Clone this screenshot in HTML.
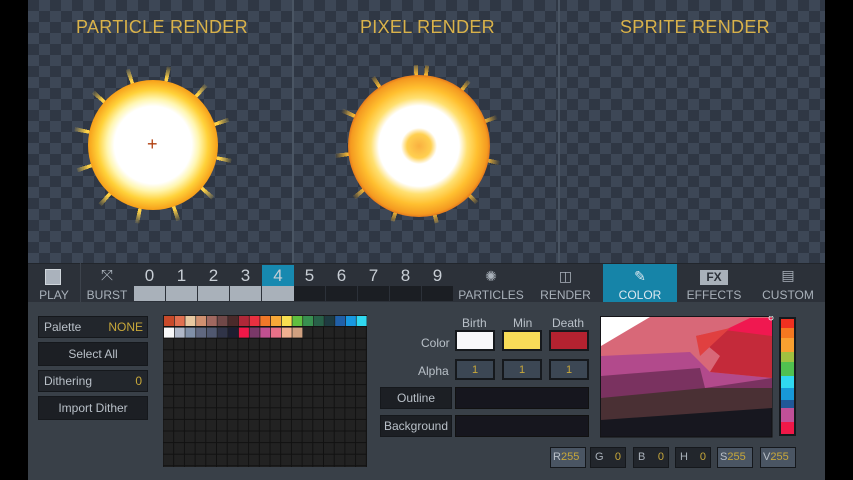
<!DOCTYPE html>
<html><head><style>
*{margin:0;padding:0;box-sizing:border-box}
body{width:853px;height:480px;background:#000;position:relative;overflow:hidden;font-family:"Liberation Sans","DejaVu Sans",sans-serif}
.a{position:absolute}
#view{left:28px;top:0;width:797px;height:263px;background-color:#2f3744;background-image:linear-gradient(45deg,#3d4756 25%,transparent 25%,transparent 75%,#3d4756 75%),linear-gradient(45deg,#3d4756 25%,transparent 25%,transparent 75%,#3d4756 75%);background-size:22px 22px;background-position:0 0,11px 11px}
.title{color:#d9b24a;font-size:18px;top:17px;letter-spacing:.3px}
.div{top:0;width:2px;height:263px;background:#4a5563}
#bar{left:28px;top:263px;width:797px;height:39px;background:#2c3139;border-top:1px solid #22262c}
.tb{color:#a9b1ba;font-size:12px;text-align:center}
.num{top:265px;width:31px;height:21px;color:#c8ced5;font-size:17px;text-align:center;line-height:21px}
.nb{top:286px;width:31px;height:15px}
#bot{left:28px;top:302px;width:797px;height:178px;background:#394048}
.btn{background:#1c1f24;border:1px solid #15181c;color:#b9c0c8;font-size:12px;line-height:20px}
.lbl{color:#b9c0c8;font-size:12px}
.sw{width:40px;height:21px;border:2px solid #16191d}
.fld{height:21px;border:1px solid #15181c;font-size:11px;color:#a9b1ba;line-height:19px}
.spk{border-radius:50%;-webkit-mask:radial-gradient(circle,#000 60%,transparent 72%);mask:radial-gradient(circle,#000 60%,transparent 72%)}
</style></head><body>
<div id="view" class="a"></div>
<div class="a div" style="left:292px"></div>
<div class="a div" style="left:558px"></div>
<div class="a title" style="left:76px">PARTICLE RENDER</div>
<div class="a title" style="left:360px">PIXEL RENDER</div>
<div class="a title" style="left:620px">SPRITE RENDER</div>
<!-- particle explosion -->
<div class="a spk" style="left:73px;top:65px;width:160px;height:160px;background:repeating-conic-gradient(from 10deg,rgba(255,210,70,1) 0 3deg,transparent 3deg 30deg)"></div>
<div class="a" style="left:88px;top:80px;width:130px;height:130px;border-radius:50%;background:radial-gradient(circle,#fff 0,#fff 42%,#fff6b0 50%,#ffd23a 60%,#f7a21b 70%,#e0561a 78%,rgba(180,40,20,.6) 82%,transparent 86%)"></div>
<div class="a" style="left:147px;top:136px;width:14px;height:16px;color:#b04010;font-size:18px;line-height:16px">+</div>
<!-- pixel explosion -->
<div class="a spk" style="left:333px;top:65px;width:170px;height:160px;background:repeating-conic-gradient(from 5deg,rgba(255,190,50,1) 0 3deg,transparent 3deg 32deg)"></div>
<div class="a" style="left:348px;top:75px;width:142px;height:142px;border-radius:50%;background:radial-gradient(circle,#f9b040 0,#ffd050 12%,#fff 18%,#fff 40%,#ffe070 48%,#ffc030 58%,#f49a20 68%,#c83a18 76%,rgba(110,20,20,.7) 80%,transparent 83%)"></div>

<div id="bar" class="a"></div>
<div class="a" style="left:45px;top:269px;width:16px;height:16px;background:#aab2bc;border:1px solid #d0d6dc"></div>
<div class="a tb" style="left:28px;top:288px;width:52px">PLAY</div>
<div class="a" style="left:80px;top:263px;width:1px;height:39px;background:#3d434c"></div>
<div class="a tb" style="left:80px;top:266px;width:54px;font-size:15px;line-height:20px">⤧</div>
<div class="a tb" style="left:80px;top:288px;width:54px">BURST</div>
<div class="a num" style="left:134px">0</div><div class="a num" style="left:166px">1</div><div class="a num" style="left:198px">2</div><div class="a num" style="left:230px">3</div><div class="a num" style="left:262px;background:#1789b0;width:32px">4</div><div class="a num" style="left:294px">5</div><div class="a num" style="left:326px">6</div><div class="a num" style="left:358px">7</div><div class="a num" style="left:390px">8</div><div class="a num" style="left:422px">9</div>
<div class="a nb" style="left:134px;background:#a9b1ba"></div><div class="a nb" style="left:166px;background:#a9b1ba"></div><div class="a nb" style="left:198px;background:#a9b1ba"></div><div class="a nb" style="left:230px;background:#a9b1ba"></div><div class="a nb" style="left:262px;background:#a9b1ba;width:32px"></div>
<div class="a nb" style="left:294px;background:#1b1e23"></div><div class="a nb" style="left:326px;background:#1b1e23"></div><div class="a nb" style="left:358px;background:#1b1e23"></div><div class="a nb" style="left:390px;background:#1b1e23"></div><div class="a nb" style="left:422px;background:#1b1e23"></div>
<div class="a" style="left:603px;top:264px;width:74px;height:38px;background:#1684a8"></div>
<div class="a tb" style="left:454px;top:268px;width:74px;font-size:14px">✺</div>
<div class="a tb" style="left:454px;top:288px;width:74px">PARTICLES</div>
<div class="a tb" style="left:528px;top:268px;width:75px;font-size:14px">◫</div>
<div class="a tb" style="left:528px;top:288px;width:75px">RENDER</div>
<div class="a tb" style="left:603px;top:268px;width:74px;font-size:14px;color:#dbe8f0">✎</div>
<div class="a tb" style="left:603px;top:288px;width:74px;color:#dbe8f0">COLOR</div>
<div class="a" style="left:700px;top:270px;width:28px;height:15px;background:#a9b1ba;color:#2c3139;font-weight:bold;font-size:12px;text-align:center;line-height:15px">FX</div>
<div class="a tb" style="left:677px;top:288px;width:74px">EFFECTS</div>
<div class="a tb" style="left:751px;top:267px;width:74px;font-size:14px">▤</div>
<div class="a tb" style="left:751px;top:288px;width:74px">CUSTOM</div>

<div id="bot" class="a"></div>
<div class="a btn" style="left:38px;top:316px;width:110px;height:22px;background:#22262c;padding-left:5px">Palette<span style="position:absolute;right:4px;color:#c8a83a">NONE</span></div>
<div class="a btn" style="left:38px;top:342px;width:110px;height:24px;text-align:center;line-height:22px">Select All</div>
<div class="a btn" style="left:38px;top:370px;width:110px;height:22px;background:#22262c;padding-left:5px">Dithering<span style="position:absolute;right:5px;color:#c8a83a">0</span></div>
<div class="a btn" style="left:38px;top:396px;width:110px;height:24px;text-align:center;line-height:22px">Import Dither</div>
<svg class="a" style="left:163px;top:315px" width="204" height="152">
<rect width="204" height="152" fill="#111"/>
<defs><pattern id="g" width="10.7" height="11.6" patternUnits="userSpaceOnUse"><rect x="0.5" y="0.5" width="9.7" height="10.6" fill="#222"/></pattern></defs>
<rect width="204" height="152" fill="url(#g)"/>
<g>
<rect x="1" y="1" width="10" height="10" fill="#c84a2a"/><rect x="11.7" y="1" width="10" height="10" fill="#e07050"/><rect x="22.4" y="1" width="10" height="10" fill="#e8c8a0"/><rect x="33.1" y="1" width="10" height="10" fill="#d09070"/><rect x="43.8" y="1" width="10" height="10" fill="#a06860"/><rect x="54.5" y="1" width="10" height="10" fill="#704848"/><rect x="65.2" y="1" width="10" height="10" fill="#4a2a2a"/><rect x="75.9" y="1" width="10" height="10" fill="#b02838"/><rect x="86.6" y="1" width="10" height="10" fill="#e83040"/><rect x="97.3" y="1" width="10" height="10" fill="#f07828"/><rect x="108" y="1" width="10" height="10" fill="#f8a838"/><rect x="118.7" y="1" width="10" height="10" fill="#f8e050"/><rect x="129.4" y="1" width="10" height="10" fill="#60c040"/><rect x="140.1" y="1" width="10" height="10" fill="#389050"/><rect x="150.8" y="1" width="10" height="10" fill="#286048"/><rect x="161.5" y="1" width="10" height="10" fill="#1e3a40"/><rect x="172.2" y="1" width="10" height="10" fill="#2060a8"/><rect x="182.9" y="1" width="10" height="10" fill="#1898e0"/><rect x="193.6" y="1" width="10" height="10" fill="#30d8f0"/>
<rect x="1" y="12.6" width="10" height="10" fill="#f8f8f8"/><rect x="11.7" y="12.6" width="10" height="10" fill="#b0b8c8"/><rect x="22.4" y="12.6" width="10" height="10" fill="#8090a8"/><rect x="33.1" y="12.6" width="10" height="10" fill="#606880"/><rect x="43.8" y="12.6" width="10" height="10" fill="#505870"/><rect x="54.5" y="12.6" width="10" height="10" fill="#303448"/><rect x="65.2" y="12.6" width="10" height="10" fill="#1c1e30"/><rect x="75.9" y="12.6" width="10" height="10" fill="#f01848"/><rect x="86.6" y="12.6" width="10" height="10" fill="#7a3868"/><rect x="97.3" y="12.6" width="10" height="10" fill="#c05090"/><rect x="108" y="12.6" width="10" height="10" fill="#e87088"/><rect x="118.7" y="12.6" width="10" height="10" fill="#f0b090"/><rect x="129.4" y="12.6" width="10" height="10" fill="#d0a080"/>
</g>
</svg>
<div class="a lbl" style="left:462px;top:316px">Birth</div>
<div class="a lbl" style="left:513px;top:316px">Min</div>
<div class="a lbl" style="left:552px;top:316px">Death</div>
<div class="a lbl" style="left:421px;top:336px">Color</div>
<div class="a lbl" style="left:418px;top:364px">Alpha</div>
<div class="a sw" style="left:455px;top:330px;background:#f8f8fa"></div>
<div class="a sw" style="left:502px;top:330px;background:#f8dc58"></div>
<div class="a sw" style="left:549px;top:330px;background:#b42230"></div>
<div class="a fld" style="left:455px;top:359px;width:40px;background:#3c4754;text-align:center;color:#c8a83a;border:2px solid #16191d">1</div>
<div class="a fld" style="left:502px;top:359px;width:40px;background:#3c4754;text-align:center;color:#c8a83a;border:2px solid #16191d">1</div>
<div class="a fld" style="left:549px;top:359px;width:40px;background:#3c4754;text-align:center;color:#c8a83a;border:2px solid #16191d">1</div>
<div class="a btn" style="left:380px;top:387px;width:72px;height:22px;text-align:center">Outline</div>
<div class="a" style="left:455px;top:387px;width:134px;height:22px;background:#16161e;border:1px solid #111"></div>
<div class="a btn" style="left:380px;top:415px;width:72px;height:22px;text-align:center">Background</div>
<div class="a" style="left:455px;top:415px;width:134px;height:22px;background:#16161e;border:1px solid #111"></div>
<svg class="a" style="left:600px;top:316px" width="200" height="122">
<rect x="0" y="0" width="172" height="121" fill="#17171f" stroke="#111"/>
<polygon points="1,1 172,1 172,92 1,104" fill="#4a3034"/>
<polygon points="1,1 172,1 172,72 105,72 1,82" fill="#7a3260"/>
<polygon points="1,1 172,1 172,62 105,72 100,52 1,60" fill="#b24a8c"/>
<polygon points="1,1 172,1 172,62 110,56 90,36 1,40" fill="#d86878"/>
<polygon points="110,56 172,62 172,18 125,14 96,20 120,40" fill="#c42a3a"/>
<polygon points="125,14 150,2 172,2 172,20" fill="#f01850"/>
<polygon points="1,1 50,1 1,30" fill="#fff"/>
<polygon points="96,20 130,12 100,40" fill="#e04040"/>
<rect x="179" y="1" width="17" height="119" fill="#16191d"/>
<rect x="181" y="3" width="13" height="9" fill="#f03020"/>
<rect x="181" y="12" width="13" height="10" fill="#f47820"/>
<rect x="181" y="22" width="13" height="14" fill="#f8a030"/>
<rect x="181" y="36" width="13" height="10" fill="#a0c040"/>
<rect x="181" y="46" width="13" height="14" fill="#50c050"/>
<rect x="181" y="60" width="13" height="12" fill="#30d8f0"/>
<rect x="181" y="72" width="13" height="12" fill="#1898d8"/>
<rect x="181" y="84" width="13" height="8" fill="#205898"/>
<rect x="181" y="92" width="13" height="14" fill="#c05098"/>
<rect x="181" y="106" width="13" height="12" fill="#f01848"/>
<circle cx="171" cy="2" r="2" fill="none" stroke="#ddd"/>
</svg>
<div class="a fld" style="left:550px;top:447px;width:36px;background:#4a5563;padding-left:2px;color:#b9c0c8">R<span style="color:#c8a83a">255</span></div>
<div class="a fld" style="left:590px;top:447px;width:36px;background:#22262c;padding-left:4px">G<span style="float:right;margin-right:4px;color:#c8a83a">0</span></div>
<div class="a fld" style="left:633px;top:447px;width:36px;background:#22262c;padding-left:4px">B<span style="float:right;margin-right:4px;color:#c8a83a">0</span></div>
<div class="a fld" style="left:675px;top:447px;width:36px;background:#22262c;padding-left:4px">H<span style="float:right;margin-right:4px;color:#c8a83a">0</span></div>
<div class="a fld" style="left:717px;top:447px;width:36px;background:#4a5563;padding-left:2px;color:#b9c0c8">S<span style="color:#c8a83a">255</span></div>
<div class="a fld" style="left:760px;top:447px;width:36px;background:#4a5563;padding-left:2px;color:#b9c0c8">V<span style="color:#c8a83a">255</span></div>
</body></html>
